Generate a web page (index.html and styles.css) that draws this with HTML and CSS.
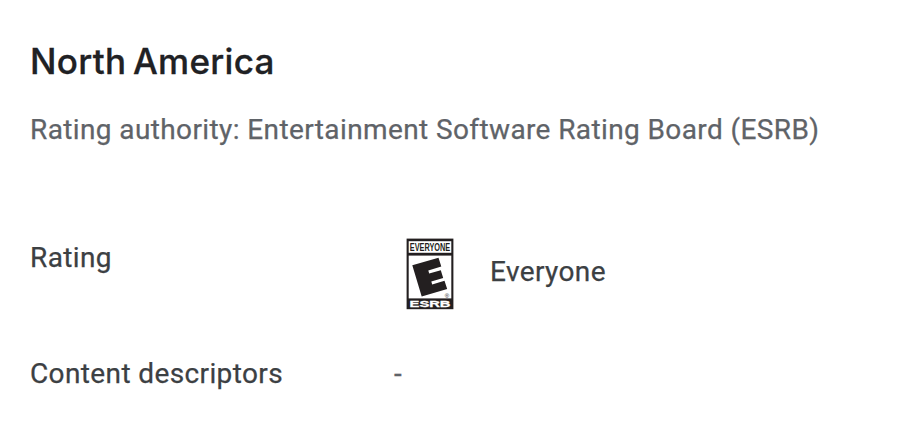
FILE: index.html
```html
<!DOCTYPE html>
<html lang="en">
<head>
<meta charset="utf-8">
<title>Content rating</title>
<link rel="stylesheet" href="styles.css">
</head>
<body>
<main class="rating-card">
<h1 class="region">North America</h1>
<p class="authority">Rating authority: Entertainment Software Rating Board (ESRB)</p>
<dl class="details">
<div class="row rating-row">
<dt>Rating</dt>
<dd class="rating">
<svg class="badge" viewBox="0 0 48 72" role="img" aria-label="ESRB Everyone">
<rect x=".6" y=".6" width="46.8" height="70.6" fill="#231f20"/>
<rect x="2.7" y="3.2" width="42.6" height="11.6" fill="#fff"/>
<rect x="2.7" y="17.6" width="42.6" height="42.8" fill="#fff"/>
<text class="badge-top" transform="translate(24 12.6) scale(.7 1)">EVERYONE</text>
<path d="M6.3 27.2 L32.5 19.7 L35.3 28.6 L22.3 32.5 L23.2 35.6 L34.8 32.2 L37.2 40 L25.3 43.5 L26.2 46.5 L38.5 42.7 L41.2 51 L15.7 58.4 Z" fill="#231f20"/>
<text class="badge-mark" x="41" y="59.5">®</text>
<text class="badge-bottom" transform="translate(24 68.6) scale(1.55 1)">ESRB</text>
</svg>
<span class="rating-name">Everyone</span>
</dd>
</div>
<div class="row">
<dt>Content descriptors</dt>
<dd class="none">-</dd>
</div>
</dl>
</main>
</body>
</html>
```
FILE: styles.css
```css
body {
  margin: 0;
  background: #fff;
  font-family: Roboto, sans-serif;
  color: #3c4043;
}
.rating-card {
  padding: 39px 30px 0;
}
.region {
  margin: 0;
  font: 500 35px/44px Inter, sans-serif;
  letter-spacing: 0.3px;
  word-spacing: -3px;
  color: #202124;
  -webkit-text-stroke: 0.3px;
}
.authority {
  margin: 29px 0 0;
  font-size: 28px;
  line-height: 36px;
  letter-spacing: 0.39px;
  color: #5f6368;
  white-space: nowrap;
  -webkit-text-stroke: 0.25px;
}
.details {
  margin: 90px 0 0;
  font-size: 28px;
  line-height: 36px;
  letter-spacing: 0.38px;
}
.row {
  display: grid;
  grid-template-columns: 363px 1fr;
}
.rating-row {
  height: 118px;
}
.rating-row dt {
  padding-top: 2px;
}
dt, dd {
  margin: 0;
}
dt, .rating-name, .none {
  -webkit-text-stroke: 0.25px;
}
.rating {
  display: flex;
  align-items: center;
  gap: 36px;
  height: 72px;
  padding-left: 13px;
}
.rating-name {
  padding-bottom: 4px;
}
.none {
  padding-left: 1px;
  color: #5f6368;
}
.badge {
  width: 48px;
  height: 72px;
}
.badge text {
  font-family: "Liberation Sans", sans-serif;
  font-weight: 700;
  text-anchor: middle;
  letter-spacing: 0;
}
.badge .badge-top {
  font-size: 10.5px;
  fill: #231f20;
}
.badge .badge-bottom {
  font-size: 9.5px;
  fill: #fff;
  stroke: #fff;
  stroke-width: 0.3px;
}
.badge .badge-mark {
  font-size: 6px;
  font-weight: 400;
  fill: #231f20;
}
```
